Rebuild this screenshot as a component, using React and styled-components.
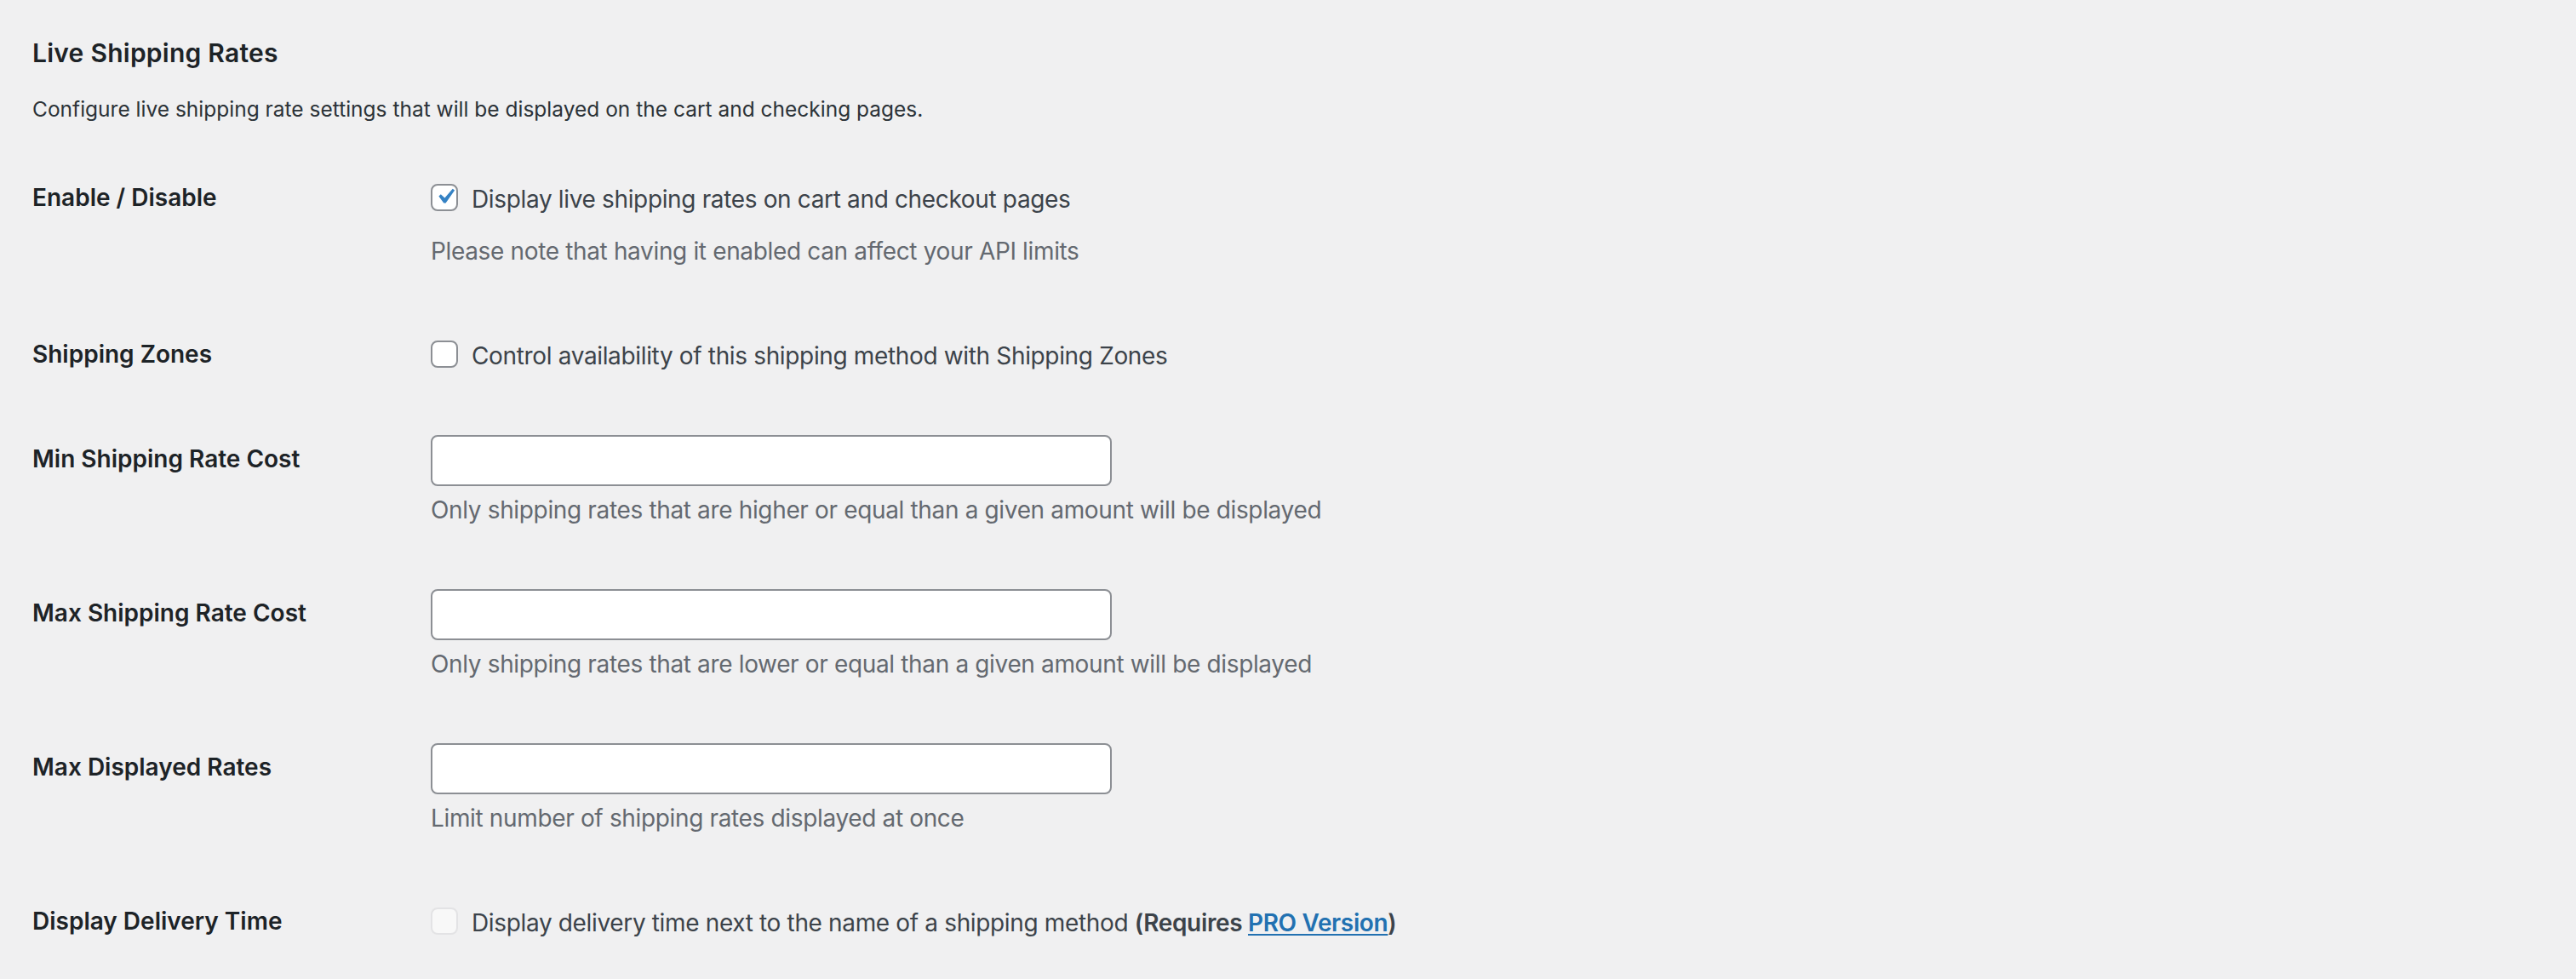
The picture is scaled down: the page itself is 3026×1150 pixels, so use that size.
import React from "react"
import styled, { createGlobalStyle } from "styled-components"

const GlobalStyle = createGlobalStyle`
  html, body {
    margin: 0;
    padding: 0;
    background: #f0f0f1;
  }
  body {
    font-family: "Inter", "Liberation Sans", sans-serif;
    color: #3c434a;
  }
`

const Page = styled.div`
  padding: 0 38px;
  min-height: 1150px;
  box-sizing: border-box;
`

const Title = styled.h2`
  margin: 43px 0 0;
  font-size: 30px;
  line-height: 38px;
  font-weight: 600;
  letter-spacing: 0.25px;
  color: #1d2327;
`

const Intro = styled.p`
  margin: 30px 0 0;
  font-size: 24.5px;
  line-height: 34px;
  color: #2c3338;
`

const FormTable = styled.div`
  margin-top: 29px;
`

const Row = styled.div`
  display: grid;
  grid-template-columns: 468px 1fr;
  padding: 30px 0 45px;
`

const Label = styled.div`
  padding-top: 10px;
  font-size: 28px;
  line-height: 36px;
  font-weight: 600;
  color: #1d2327;
`

const Field = styled.div`
  display: flex;
  flex-direction: column;
  align-items: flex-start;
`

const CheckLine = styled.label`
  display: flex;
  align-items: flex-start;
  gap: 16px;
  margin-top: 12px;
  font-size: 28px;
  line-height: 36px;
  letter-spacing: -0.35px;
  color: #3c434a;
`

const Box = styled.span`
  flex: none;
  width: 32px;
  height: 32px;
  box-sizing: border-box;
  border-radius: 8px;
  border: 2px solid ${(p) => (p.$disabled ? "rgba(220, 220, 222, 0.75)" : "#8c8f94")};
  background: ${(p) => (p.$disabled ? "rgba(255, 255, 255, 0.5)" : "#fff")};
  display: flex;
  align-items: center;
  justify-content: center;
`

const TextInput = styled.input`
  width: 800px;
  height: 60px;
  box-sizing: border-box;
  border: 2px solid #8c8f94;
  border-radius: 8px;
  background: #fff;
  padding: 0 16px;
  font: inherit;
  font-size: 28px;
  outline: none;
`

const Description = styled.p`
  margin: ${(p) => p.$gap}px 0 0;
  font-size: 28px;
  line-height: 36px;
  letter-spacing: -0.35px;
  color: #646970;
`

const Strong = styled.strong`
  font-weight: 600;
`

const ProLink = styled.a`
  color: #2271b1;
  font-weight: 600;
  text-decoration: underline;
  text-underline-offset: 3px;
  text-decoration-thickness: 2px;
`

const CheckMark = () => (
  <svg width="38" height="38" viewBox="0 0 20 20" style={{ margin: "-4px -5px -2px -3px" }}>
    <path d="M14.83 4.89l1.34.94-5.81 8.38H9.02L5.78 9.67l1.34-1.25 2.57 2.4z" fill="#3582c4" />
  </svg>
)

const Checkbox = ({ checked, disabled }) => (
  <Box $disabled={disabled}>{checked && <CheckMark />}</Box>
)

const InputRow = ({ label, hint }) => (
  <Row>
    <Label>{label}</Label>
    <Field>
      <TextInput type="text" />
      <Description $gap={10}>{hint}</Description>
    </Field>
  </Row>
)

export default function App() {
  return (
    <>
      <GlobalStyle />
      <Page>
        <Title>Live Shipping Rates</Title>
        <Intro>Configure live shipping rate settings that will be displayed on the cart and checking pages.</Intro>
        <FormTable>
          <Row>
            <Label>Enable / Disable</Label>
            <Field>
              <CheckLine>
                <Checkbox checked />
                Display live shipping rates on cart and checkout pages
              </CheckLine>
              <Description $gap={25}>Please note that having it enabled can affect your API limits</Description>
            </Field>
          </Row>
          <Row>
            <Label>Shipping Zones</Label>
            <Field>
              <CheckLine>
                <Checkbox />
                Control availability of this shipping method with Shipping Zones
              </CheckLine>
            </Field>
          </Row>
          <InputRow
            label="Min Shipping Rate Cost"
            hint="Only shipping rates that are higher or equal than a given amount will be displayed"
          />
          <InputRow
            label="Max Shipping Rate Cost"
            hint="Only shipping rates that are lower or equal than a given amount will be displayed"
          />
          <InputRow label="Max Displayed Rates" hint="Limit number of shipping rates displayed at once" />
          <Row>
            <Label>Display Delivery Time</Label>
            <Field>
              <CheckLine>
                <Checkbox disabled />
                <span>
                  Display delivery time next to the name of a shipping method{" "}
                  <Strong>
                    (Requires <ProLink href="#">PRO Version</ProLink>)
                  </Strong>
                </span>
              </CheckLine>
            </Field>
          </Row>
        </FormTable>
      </Page>
    </>
  )
}
